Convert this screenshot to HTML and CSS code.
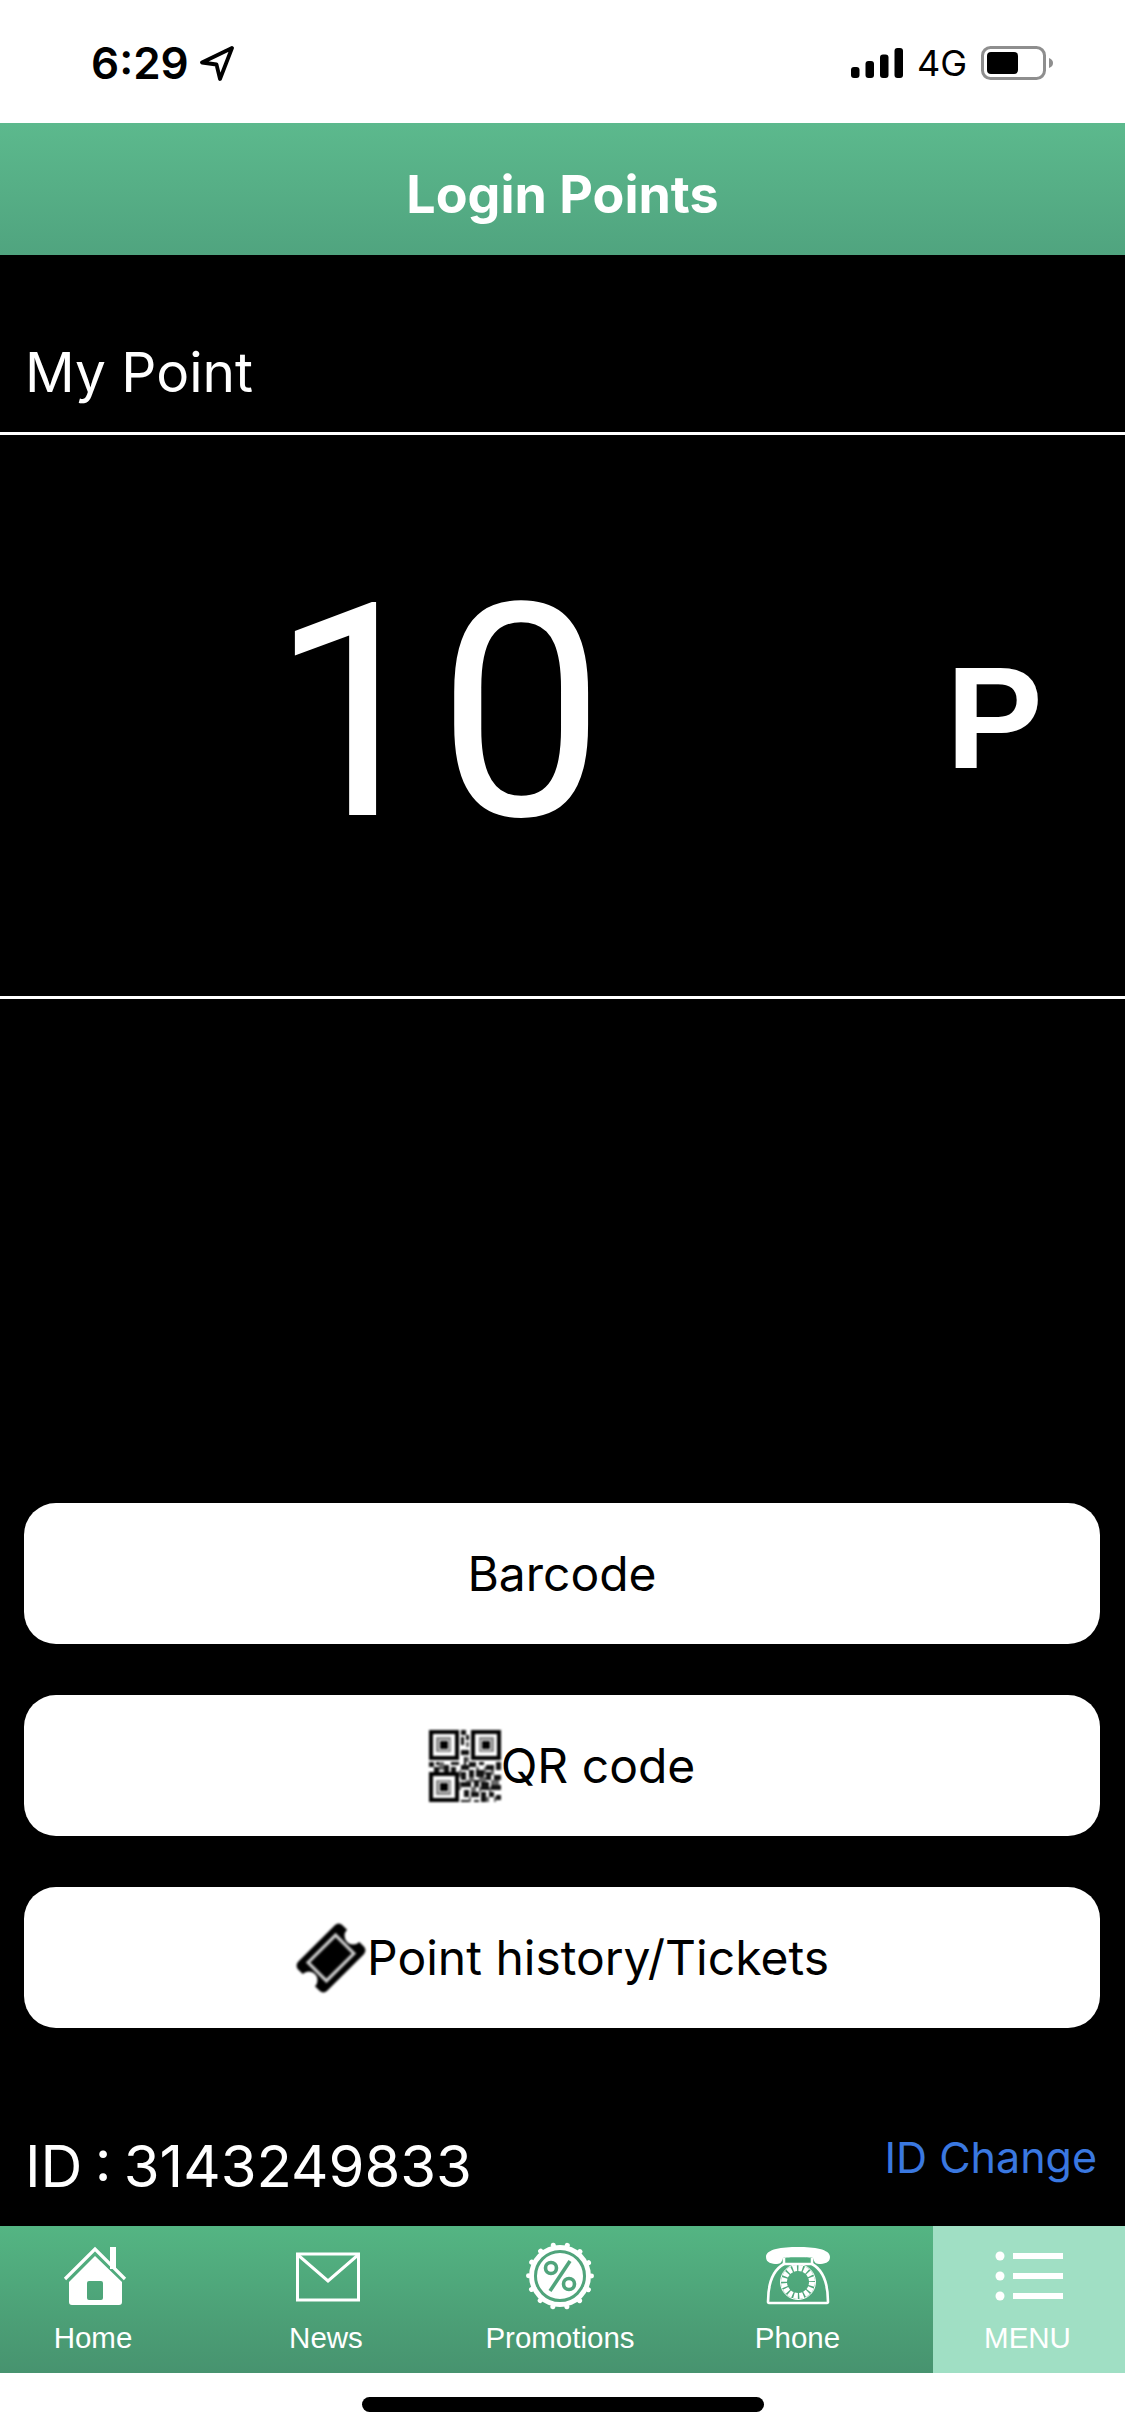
FILE: index.html
```html
<!DOCTYPE html>
<html lang="en">
<head>
  <meta charset="UTF-8" />
  <meta name="viewport" content="width=device-width, initial-scale=1.0"/>
  <title>Login Points</title>
  <link rel="stylesheet" href="styles.css">
</head>
<body>
  <div class="page">

    <!-- Status bar -->
    <div class="status-bar">
      <div class="status-left">
        <span class="status-time">6:29</span>
        <svg class="status-arrow" viewBox="0 0 36 36"><path d="M33 3 L3 17.500 L17.500 19.500 L21 34 Z" fill="none" stroke="#000" stroke-width="3.800" stroke-linejoin="round"/></svg>
      </div>
      <div class="status-right">
        <svg class="status-signal" viewBox="0 0 52 30">
          <rect x="0" y="19" width="8.500" height="11" rx="3"/>
          <rect x="14.500" y="13" width="8.500" height="17" rx="3"/>
          <rect x="29" y="6.500" width="8.500" height="23.500" rx="3"/>
          <rect x="43.500" y="0" width="8.500" height="30" rx="3"/>
        </svg>
        <span class="status-net">4G</span>
        <svg class="status-battery" viewBox="0 0 72 34">
          <rect x="1.500" y="1.500" width="62" height="31" rx="8" fill="none" stroke="#8e8e8e" stroke-width="3"/>
          <rect x="6" y="6" width="31" height="22" rx="4"/>
          <path d="M68 12 C71 13 72 15 72 17 C72 19 71 21 68 22 Z" fill="#8e8e8e"/>
        </svg>
      </div>
    </div>

    <!-- Header -->
    <header class="top-bar">Login Points</header>

    <main class="content">
      <div class="section-title">My Point</div>

      <div class="points">
        <span class="points-value">10</span>
        <span class="points-unit">P</span>
      </div>

      <div class="buttons">
        <a class="btn">Barcode</a>
        <a class="btn">
          <svg class="btn-icon" viewBox="0 0 29 29" shape-rendering="crispEdges">
            <path fill="#fff" d="M0 0h29v29H0z"/>
            <!-- finder squares -->
            <path fill="#000" fill-rule="evenodd" d="M0 0h12v12H0z M1.500 1.500v9h9v-9z M17 0h12v12H17z M18.500 1.500v9h9v-9z M0 17h12v12H0z M1.500 18.500v9h9v-9z"/>
            <path fill="#888" fill-rule="evenodd" d="M3 3h6v6H3z M4 4v4h4V4z M20 3h6v6h-6z M21 4v4h4V4z M3 20h6v6H3z M4 21v4h4v-4z"/>
            <path fill="#000" d="M4.500 4.500h3v3h-3z M21.500 4.500h3v3h-3z M4.500 21.500h3v3h-3z"/>
            <!-- data modules -->
            <path fill="#111" d="M13 0h2v2h-2z M13 3h1v3h-1z M15 2h1v2h-1z M13 8h3v2h-3z M14 11h1v3h-1z M13 14h3v2h-3z
              M0 13h2v2H0z M3 13h3v1H3z M2 15h2v2H2z M6 14h2v3H6z M9 13h3v1H9z M9 15h2v2H9z
              M16 13h3v2h-3z M20 13h2v1h-2z M23 14h3v2h-3z M27 13h2v3h-2z M16 16h2v3h-2z M19 16h3v3h-3z M23 17h2v3h-2z M26 18h3v2h-3z
              M13 17h2v3h-2z M13 21h4v2h-4z M18 20h2v3h-2z M21 21h3v3h-3z M25 22h4v2h-4z M14 24h2v3h-2z M17 25h3v2h-3z M21 25h2v4h-2z M24 25h2v2h-2z M27 26h2v2h-2z M13 28h3v1h-3z M18 28h2v1h-2z"/>
            <path fill="#666" d="M15 5h1v2h-1z M15 11h1v2h-1z M12 16h1v3h-1z M19 15h1v1h-1z M22 15h1v3h-1z M16 19h2v1h-2z M22 19h1v2h-1z M25 16h1v2h-1z M17 23h2v2h-2z M24 23h1v2h-1z M20 23h1v2h-1z M26 27h1v2h-1z M4 13h2v3H4z M12 21h1v3h-1z M15 20h3v1h-3z M20 19h2v2h-2z M25 20h3v2h-3z M16 27h1v2h-1z M23 27h1v2h-1z"/>
          </svg>QR code
        </a>
        <a class="btn">
          <svg class="btn-icon" viewBox="0 0 72 72">
            <g transform="rotate(-45 36 36) translate(36 36) scale(1.08) translate(-36 -36)">
              <path fill="#000" d="M12 17 H60 A5 5 0 0 1 65 22 V28 A8 8 0 0 0 65 44 V50 A5 5 0 0 1 60 55 H12 A5 5 0 0 1 7 50 V44 A8 8 0 0 0 7 28 V22 A5 5 0 0 1 12 17 Z"/>
              <rect x="18" y="24" width="36" height="24" fill="none" stroke="#c9c9c9" stroke-width="3"/>
            </g>
          </svg>Point history/Tickets
        </a>
      </div>

      <div class="id-row">
        <span class="id-text">ID : 3143249833</span>
        <a class="id-change">ID Change</a>
      </div>
    </main>

    <!-- Bottom menu -->
    <nav class="tabs">
      <a class="tab">
        <svg class="tab-icon" viewBox="0 0 72 72">
          <path d="M8 39 L38 9 L68 39" fill="none" stroke="#fff" stroke-width="3.200"/>
          <path d="M53 7 h6 v22 h-6 Z" fill="#fff"/>
          <path fill="#fff" fill-rule="evenodd" d="M38 16 L65 42 V62 A3 3 0 0 1 62 65 H15 A3 3 0 0 1 12 62 V42 Z M32 41 A2 2 0 0 0 30 43 V58 A2 2 0 0 0 32 60 H44 A2 2 0 0 0 46 58 V43 A2 2 0 0 0 44 41 Z"/>
        </svg>
        <span>Home</span>
      </a>
      <a class="tab tab-news">
        <svg class="tab-icon" viewBox="0 0 72 72">
          <rect x="5.500" y="14" width="61" height="46" fill="none" stroke="#fff" stroke-width="3"/>
          <path d="M6 15 L36 41 L66 15" fill="none" stroke="#fff" stroke-width="3"/>
        </svg>
        <span>News</span>
      </a>
      <a class="tab">
        <svg class="tab-icon" viewBox="0 0 72 72">
          <circle cx="36" cy="36" r="31" fill="#fff"/>
          <circle cx="36" cy="36" r="31.500" fill="none" stroke="#fff" stroke-width="5" stroke-linecap="round" stroke-dasharray="0.100 14.040"/>
          <circle cx="36" cy="36" r="24.500" fill="none" stroke="#50a47b" stroke-width="3"/>
          <circle cx="27" cy="28" r="5.500" fill="none" stroke="#50a47b" stroke-width="3.600"/>
          <circle cx="45" cy="44" r="5.500" fill="none" stroke="#50a47b" stroke-width="3.600"/>
          <path d="M46 21 L26 51" stroke="#50a47b" stroke-width="3.600"/>
        </svg>
        <span>Promotions</span>
      </a>
      <a class="tab tab-phone">
        <svg class="tab-icon" viewBox="0 0 72 72">
          <path fill="#fff" d="M4 17 C4 9 20 7 36 7 C52 7 68 9 68 17 C68 23 62 24 57 24 C53 24 52 21 51 18 C47 17 25 17 21 18 C20 21 19 24 15 24 C10 24 4 23 4 17 Z"/>
          <path d="M22 18 V24 H50 V18" fill="none" stroke="#fff" stroke-width="2.500"/>
          <path d="M22 24 C11 30 6 44 6 62 A1.500 1.500 0 0 0 7.500 63 H64.500 A1.500 1.500 0 0 0 66 62 C66 44 61 30 50 24" fill="none" stroke="#fff" stroke-width="2.600"/>
          <circle cx="36" cy="42" r="14" fill="none" stroke="#fff" stroke-width="6" stroke-dasharray="4 1.500"/>
          <circle cx="36" cy="42" r="17.500" fill="none" stroke="#fff" stroke-width="1"/>
        </svg>
        <span>Phone</span>
      </a>
      <a class="tab tab-menu">
        <svg class="tab-icon" viewBox="0 0 72 72">
          <circle cx="7" cy="16" r="4.500" fill="#fff"/>
          <circle cx="7" cy="36" r="4.500" fill="#fff"/>
          <circle cx="7" cy="56" r="4.500" fill="#fff"/>
          <rect x="20" y="13" width="50" height="6" fill="#fff"/>
          <rect x="20" y="33" width="50" height="6" fill="#fff"/>
          <rect x="20" y="53" width="50" height="6" fill="#fff"/>
        </svg>
        <span class="tab-menu-label">MENU</span>
      </a>
    </nav>

    <div class="home-area">
      <div class="home-indicator"></div>
    </div>
  </div>
</body>
</html>
```
FILE: styles.css
```css
/* ======= Base ======= */
body {
  margin: 0;
  background: #fff;
  font-family: "Liberation Sans", Arial, sans-serif;
}

.page {
  width: 1125px;
  height: 2436px;
  display: flex;
  flex-direction: column;
  overflow: hidden;
}

/* ======= Status bar ======= */
.status-bar {
  height: 123px;
  display: flex;
  justify-content: space-between;
  align-items: flex-start;
  box-sizing: border-box;
  padding: 36px 72px 0 91px;
  font-family: Inter, sans-serif;
  color: #000;
}

.status-left {
  display: flex;
  align-items: center;
  gap: 10px;
  height: 54px;
}

.status-time {
  font-size: 44px;
  font-weight: 600;
}

.status-arrow {
  width: 36px;
  height: 36px;
}

.status-right {
  display: flex;
  align-items: center;
  height: 54px;
  gap: 14px;
}

.status-signal {
  width: 52px;
  height: 30px;
}

.status-net {
  font-size: 36px;
}

.status-battery {
  width: 72px;
  height: 34px;
}

/* ======= Header ======= */
.top-bar {
  height: 132px;
  box-sizing: border-box;
  padding-top: 6px;
  line-height: 132px;
  text-align: center;
  background: linear-gradient(#5cb98d, #50a47f);
  color: #fff;
  font-family: Inter, sans-serif;
  font-size: 52px;
  font-weight: 700;
}

/* ======= Main area ======= */
.content {
  flex: 1;
  display: flex;
  flex-direction: column;
  background: #000;
  color: #fff;
}

.section-title {
  height: 180px;
  box-sizing: border-box;
  padding: 81px 0 0 25px;
  font-family: Inter, sans-serif;
  font-size: 55px;
  line-height: 72px;
  border-bottom: 3px solid #fff;
}

.points {
  height: 564px;
  box-sizing: border-box;
  border-bottom: 3px solid #fff;
  display: flex;
  align-items: flex-start;
}

.points-value {
  margin: 106px 0 0 270px;
  font-family: Roboto, sans-serif;
  font-size: 298px;
  line-height: 345px;
}

.points-unit {
  margin: 200px 0 0 341px;
  font-size: 145px;
  line-height: 167px;
  font-weight: bold;
}

/* ======= Buttons ======= */
.buttons {
  margin-top: 504px;
  padding: 0 25px 0 24px;
  display: flex;
  flex-direction: column;
  gap: 51px;
}

.btn {
  height: 141px;
  background: #fff;
  border-radius: 32px;
  color: #000;
  display: flex;
  align-items: center;
  justify-content: center;
  font-family: Inter, sans-serif;
  font-size: 48px;
}

.btn-icon {
  width: 72px;
  height: 72px;
  filter: blur(1px);
}

/* ======= ID row ======= */
.id-row {
  margin-top: 102px;
  padding: 0 28px 0 25px;
  display: flex;
  justify-content: space-between;
  align-items: flex-start;
}

.id-text {
  font-family: Inter, sans-serif;
  font-size: 58px;
  word-spacing: -4px;
  line-height: 72px;
}

.id-change {
  font-family: Inter, sans-serif;
  font-size: 43px;
  line-height: 54px;
  color: #3a78e0;
}

/* ======= Bottom menu ======= */
.tabs {
  height: 147px;
  display: grid;
  grid-template-columns: 186px 280px 188px 279px 192px;
  background: linear-gradient(#54b583, #47936f);
}

.tab {
  display: flex;
  flex-direction: column;
  align-items: center;
  box-sizing: border-box;
  padding-top: 14px;
  color: #fff;
  font-size: 29.500px;
  line-height: 36px;
}

.tab-news .tab-icon {
  margin-left: 3px;
}

.tab-phone {
  padding-left: 8px;
}

.tab-menu {
  background: #a0dfc4;
}

.tab-menu-label {
  margin-right: 3px;
}

.tab-icon {
  width: 72px;
  height: 72px;
  margin-bottom: 8px;
  filter: blur(0.5px);
}

/* ======= Home indicator ======= */
.home-area {
  height: 63px;
  box-sizing: border-box;
  padding-top: 24px;
}

.home-indicator {
  width: 402px;
  height: 15px;
  margin-left: 362px;
  background: #000;
  border-radius: 8px;
}
```
